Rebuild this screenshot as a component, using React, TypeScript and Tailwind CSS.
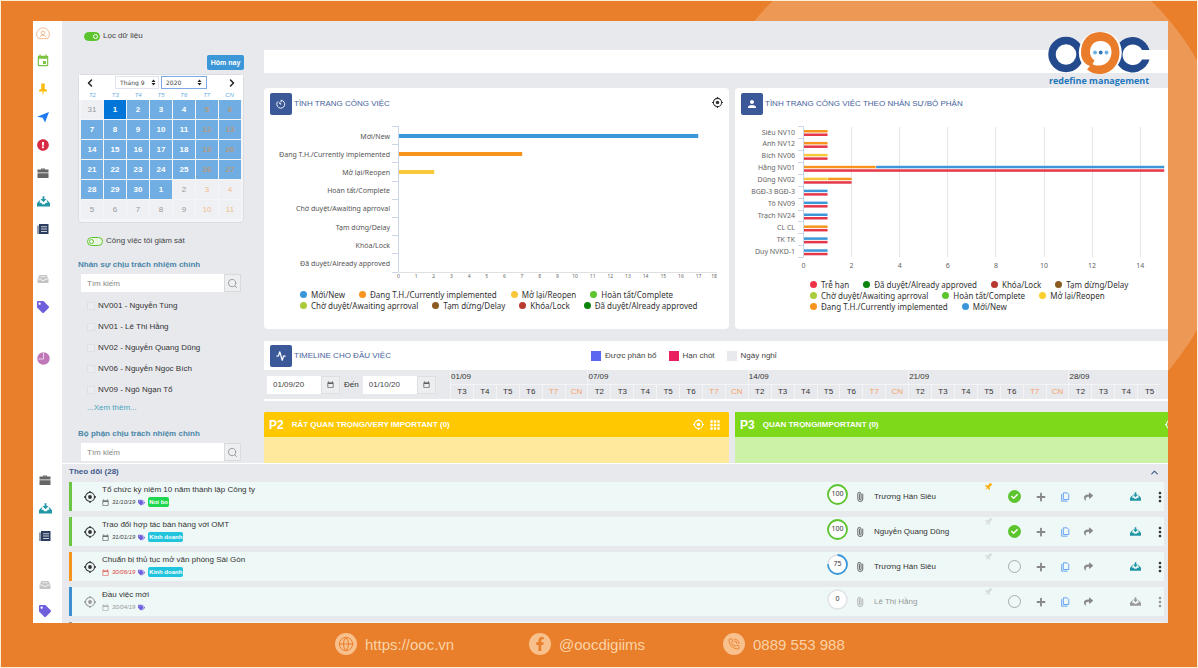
import React from "react";
import { FaExclamationCircle, FaTag, FaTags, FaFacebookF, FaShare, FaPlus, FaCheck } from "react-icons/fa";
import { MdEvent, MdOutlineCalendarToday, MdPerson, MdApps, MdMoreVert } from "react-icons/md";
import { Activity, ChevronLeft, ChevronRight, ChevronUp, Globe, Paperclip, PhoneCall, Search } from "lucide-react";

/* ---------- icons ---------- */

type IconProps = { className?: string };

const Target = ({ className }: IconProps) => (
  <svg viewBox="0 0 24 24" className={className} fill="none" stroke="currentColor" aria-hidden="true">
    <circle cx="12" cy="12" r="9" strokeWidth="2.2" />
    <circle cx="12" cy="12" r="3.8" fill="currentColor" stroke="none" />
    <path d="M12 0v3M12 21v3M0 12h3M21 12h3" strokeWidth="2.6" />
  </svg>
);

const Face = ({ className }: IconProps) => (
  <svg viewBox="0 0 24 24" className={className} fill="none" stroke="currentColor" strokeWidth="1.6" aria-hidden="true">
    <path d="M4 20a11 11 0 1 1 16 0z" />
    <circle cx="12" cy="10" r="3.2" />
    <path d="M6.5 18c1-3 3-4 5.500-4s4.500 1 5.500 4" />
  </svg>
);

const Pin = ({ className }: IconProps) => (
  <svg viewBox="0 0 24 24" className={className} fill="currentColor" aria-hidden="true">
    <path d="M8.500 1h7v10.500l4.500 2.500v3H4v-3l4.500-2.500zM11 17h2v6h-2z" />
  </svg>
);

const Arrow = ({ className }: IconProps) => (
  <svg viewBox="0 0 24 24" className={className} fill="currentColor" aria-hidden="true">
    <path d="M24 2L0 11.500l11.500 1.800L16 23z" />
  </svg>
);

const Briefcase = ({ className }: IconProps) => (
  <svg viewBox="0 0 24 24" className={className} fill="currentColor" aria-hidden="true">
    <path d="M8 5V3h8v2h7v6H1V5zm2 0h4V4.400h-4zM1 12.500h22V22H1z" />
  </svg>
);

const Tray = ({ className }: IconProps) => (
  <svg viewBox="0 0 24 24" className={className} fill="currentColor" aria-hidden="true">
    <path d="M10.300 2.500h3.400v5h3.800L12 13.500 6.500 7.500h3.800z" />
    <path d="M4.500 10h2l-2.300 4.500H8L9.500 17h5l1.500-2.500h3.800L17.500 10h2l4.500 5v6H0v-6z" />
  </svg>
);

const Journal = ({ className }: IconProps) => (
  <svg viewBox="0 0 24 24" className={className} aria-hidden="true">
    <path fill="currentColor" d="M4 2h19v20H4zM1 5h2v17H1z" />
    <path stroke="#fff" strokeWidth="1.500" d="M8 7.500h12M8 12h12M8 17h12" />
  </svg>
);

const Inbox = ({ className }: IconProps) => (
  <svg viewBox="0 0 24 24" className={className} aria-hidden="true">
    <path fill="currentColor" d="M5 4h14l4 8v8H1v-8z" />
    <path fill="none" stroke="#fff" strokeWidth="1.500" d="M2 12h6l1.500 3h5L16 12h6M7 7.500h10" />
  </svg>
);

const PieClock = ({ className }: IconProps) => (
  <svg viewBox="0 0 24 24" className={className} aria-hidden="true">
    <circle cx="12" cy="12" r="11.500" fill="currentColor" />
    <path fill="none" stroke="#f3e4f1" strokeWidth="1.600" d="M12 1v12H3" />
  </svg>
);

const Gauge = ({ className }: IconProps) => (
  <svg viewBox="0 0 24 24" className={className} fill="none" stroke="currentColor" strokeWidth="2.2" aria-hidden="true">
    <path d="M5 5.500A9.500 9.500 0 1 0 12 3v5" />
    <path d="M7.500 8.500L12 13" strokeWidth="2.800" />
  </svg>
);

const Copy = ({ className }: IconProps) => (
  <svg viewBox="0 0 24 24" className={className} fill="none" stroke="currentColor" strokeWidth="2.2" aria-hidden="true">
    <path d="M8 2h9l4 4v12H8z" />
    <path d="M4 5v17h14" />
  </svg>
);

const Sort = ({ className }: IconProps) => (
  <svg viewBox="0 0 8 12" className={className} fill="currentColor" aria-hidden="true">
    <path d="M4 1l3.500 4.300h-7zM4 11L.5 6.700h7z" />
  </svg>
);

const Logo = () => (
  <svg viewBox="0 0 102 44" className="block h-[44px] w-[102px]" role="img" aria-label="OOC">
    <circle cx="18" cy="22.500" r="14" fill="#fff" stroke="#234a8d" strokeWidth="7.400" />
    <circle cx="84.500" cy="22.500" r="12" fill="#fff" />
    <path d="M101.500 18H94A10.300 10.300 0 1 0 94 27.500H101.500A17.700 17.700 0 1 1 101.500 18z" fill="#234a8d" />
    <circle cx="52.300" cy="20.500" r="21.500" fill="#fff" />
    <path
      fill="#ea7d2c"
      fillRule="evenodd"
      d="M52 0C63.500 0 71.500 8.500 71.500 20.500S63 42 52 42c-5 0-9.500-1.500-13-4.800l3-3.200C35.500 31.500 33 26.500 33 20.500 33 8.500 40.500 0 52 0zm.5 9C46 9 42 13.500 42 20c0 3.500 1.500 6.500 4.500 8.500L44.500 32c1.500 1.200 4 1.800 7.500 1.500C59 33 63.500 27 63.500 20S59 9 52.500 9z"
    />
    <circle cx="47" cy="20.500" r="1.900" fill="#6cb1e0" />
    <circle cx="52.700" cy="20.500" r="1.900" fill="#2f74b5" />
    <circle cx="58.500" cy="20.500" r="1.900" fill="#6cb1e0" />
  </svg>
);

/* ---------- navigation ---------- */

const navTop = [
  { label: "Cá nhân", icon: <Face className="size-3.5 text-[#f3b68a]" />, box: "h-[26px]" },
  { label: "Lịch", icon: <MdEvent className="size-3.5 text-[#7bc142]" />, box: "h-7" },
  { label: "Ghim", icon: <Pin className="size-3 text-[#fbbc12]" />, box: "h-7" },
  { label: "Đã gửi", icon: <Arrow className="size-3 text-[#1f7af0]" />, box: "h-7" },
  { label: "Cảnh báo", icon: <FaExclamationCircle className="size-3 text-[#d92b45]" />, box: "h-7" },
  { label: "Công việc", icon: <Briefcase className="size-3 text-[#666666]" />, box: "h-7" },
  { label: "Tải về", icon: <Tray className="size-[13px] text-[#2196a6]" />, box: "h-7" },
  { label: "Báo cáo", icon: <Journal className="size-3 text-[#2c3e5f]" />, box: "h-7" },
  { label: "Hộp thư", icon: <Inbox className="size-3 text-[#c4c4c4]" />, box: "mt-[22px] h-7" },
  { label: "Nhãn", icon: <FaTag className="size-3 text-[#6f5fdc]" />, box: "h-7" },
  { label: "Thống kê", icon: <PieClock className="size-[13px] text-[#bf77b8]" />, box: "mt-[23px] h-7" },
];

const navBottom = [
  { label: "Công việc", icon: <Briefcase className="size-3 text-[#666666]" />, box: "mt-[3px] h-7" },
  { label: "Tải về", icon: <Tray className="size-[13px] text-[#2196a6]" />, box: "h-7" },
  { label: "Báo cáo", icon: <Journal className="size-3 text-[#2c3e5f]" />, box: "h-7" },
  { label: "Hộp thư", icon: <Inbox className="size-3 text-[#c4c4c4]" />, box: "mt-[21px] h-7" },
  { label: "Nhãn", icon: <FaTag className="size-3 text-[#6f5fdc]" />, box: "h-6" },
];

function SideNav({ items, pad }: { items: typeof navTop; pad: string }) {
  return (
    <nav className="w-[29px] shrink-0 bg-white">
      <ul className={pad}>
        {items.map((it) => (
          <li key={it.label} className={it.box}>
            <a href="#" aria-label={it.label} className="flex h-full w-3 items-center justify-center *:shrink-0">
              {it.icon}
            </a>
          </li>
        ))}
      </ul>
    </nav>
  );
}

/* ---------- filters ---------- */

function Toggle({ label, on, pad }: { label: string; on: boolean; pad: string }) {
  return (
    <label className={`flex items-center gap-[3px] text-[#444] ${pad}`}>
      <input
        type="checkbox"
        defaultChecked={on}
        className="relative h-[9px] w-4 appearance-none rounded-full border border-[#5cc52e] bg-[#e8f6e2] before:absolute before:top-px before:left-px before:size-[5px] before:rounded-full before:border before:border-[#5cc52e] before:bg-white checked:bg-[#5cc52e] checked:before:left-[8px] checked:before:border-white checked:before:bg-[#5cc52e]"
      />
      {label}
    </label>
  );
}

const weekDays = ["T2", "T3", "T4", "T5", "T6", "T7", "CN"];
const calendarDays = [31, ...Array.from({ length: 30 }, (_, i) => i + 1), ...Array.from({ length: 11 }, (_, i) => i + 1)];

function dayStyle(i: number) {
  const weekend = i % 7 > 4;
  if (i === 1) return "bg-[#0275d8] font-bold text-white";
  if (i > 0 && i < 32) return weekend ? "bg-[#6fade2] font-bold text-[#b59a80]" : "bg-[#6fade2] font-bold text-white";
  return weekend ? "bg-[#eff0f3] text-[#f3bd8a]" : "bg-[#eff0f3] text-[#999]";
}

function Calendar() {
  return (
    <div className="mt-1 mr-5 ml-4 rounded-sm border border-[#dcdde2] bg-[#f4f5f7]">
      <div className="flex items-center bg-white px-[5px] pt-px">
        <button aria-label="Tháng trước" className="mr-auto">
          <ChevronLeft className="size-3 text-[#222]" strokeWidth={3} />
        </button>
        <div className="relative">
          <select aria-label="Tháng" className="h-[13px] w-[44px] appearance-none rounded-none border border-[#dfe3ee] bg-white pl-1 font-['DejaVu_Sans'] text-[6px] text-[#444]">
            <option>Tháng 9</option>
          </select>
          <Sort className="pointer-events-none absolute top-[3px] right-[3px] h-[7px] w-[5px] text-[#222]" />
        </div>
        <div className="relative ml-0.5">
          <select aria-label="Năm" className="h-[13px] w-[46px] appearance-none rounded-none border border-[#80a8e4] bg-white pl-1 font-['DejaVu_Sans'] text-[6px] text-[#444]">
            <option>2020</option>
          </select>
          <Sort className="pointer-events-none absolute top-[3px] right-[5px] h-[7px] w-[5px] text-[#222]" />
        </div>
        <button aria-label="Tháng sau" className="ml-auto">
          <ChevronRight className="size-3 text-[#222]" strokeWidth={3} />
        </button>
      </div>
      <div className="grid grid-cols-7 bg-white px-0.5 pt-0.5 pb-px text-center text-[6px] text-[#6aaee0] italic">
        {weekDays.map((d) => (
          <span key={d} className="h-2 leading-[8px]">{d}</span>
        ))}
      </div>
      <div className="grid grid-cols-7 gap-px px-0.5 pb-[3px]">
        {calendarDays.map((d, i) => (
          <button key={i} className={`h-[19px] border border-transparent ${dayStyle(i)}`}>
            {d}
          </button>
        ))}
      </div>
    </div>
  );
}

function SearchField({ id }: { id: string }) {
  return (
    <div className="mt-[3px] mr-[23px] ml-[19px] flex h-[18px]">
      <input id={id} placeholder="Tìm kiếm" className="w-0 flex-1 bg-white px-1.5 placeholder:text-[#888]" />
      <button aria-label="Tìm" className="flex w-[17px] items-center justify-center border border-[#d9dade] bg-[#eeeff1]">
        <Search className="size-[11px] text-[#999]" strokeWidth={2} />
      </button>
    </div>
  );
}

const people = ["NV001 - Nguyễn Tùng", "NV01 - Lê Thị Hằng", "NV02 - Nguyễn Quang Dũng", "NV06 - Nguyễn Ngọc Bích", "NV09 - Ngô Ngạn Tổ"];

function Filters() {
  return (
    <aside className="w-[202px] shrink-0 pt-2.5 pb-0.5">
      <Toggle label="Lọc dữ liệu" on pad="h-2.5 pl-[22px]" />
      <div className="mt-3.5 mr-5 flex justify-end">
        <button className="h-[15px] w-[37px] rounded-[2px] bg-[#3b97d8] text-[7px] font-bold text-white">Hôm nay</button>
      </div>
      <Calendar />
      <Toggle label="Công việc tôi giám sát" on={false} pad="mt-3 h-3 pl-[25px]" />
      <label htmlFor="person" className="mt-3 ml-4 block h-3 leading-[12px] font-bold text-[#4a86a8]">
        Nhân sự chịu trách nhiệm chính
      </label>
      <SearchField id="person" />
      <ul className="mt-[3px] ml-[25px]">
        {people.map((p) => (
          <li key={p}>
            <label className="flex h-[21px] items-center gap-[3px] text-[#333]">
              <input type="checkbox" className="size-2 appearance-none border border-[#dfe0e4] bg-[#ebecef]" />
              {p}
            </label>
          </li>
        ))}
      </ul>
      <a href="#" className="ml-[25px] block h-4 leading-[16px] text-[#4ba3bd]">
        ...Xem thêm...
      </a>
      <label htmlFor="unit" className="mt-3 ml-4 block h-3 leading-[12px] font-bold text-[#4a86a8]">
        Bộ phận chịu trách nhiệm chính
      </label>
      <SearchField id="unit" />
    </aside>
  );
}

/* ---------- charts ---------- */

const BLUE = "#3b97d8";
const ORANGE = "#f7941d";
const YELLOW = "#f9c73a";
const RED = "#e5374a";

const statuses = [
  { name: "Mới/New", value: 17, color: BLUE },
  { name: "Đang T.H./Currently implemented", value: 7, color: ORANGE },
  { name: "Mở lại/Reopen", value: 2, color: YELLOW },
  { name: "Hoàn tất/Complete", value: 0, color: "" },
  { name: "Chờ duyệt/Awaiting aprroval", value: 0, color: "" },
  { name: "Tạm dừng/Delay", value: 0, color: "" },
  { name: "Khóa/Lock", value: 0, color: "" },
  { name: "Đã duyệt/Already approved", value: 0, color: "" },
];

function StatusChart() {
  const step = 18.2;
  return (
    <svg viewBox="0 0 465 165" className="mt-1 block h-auto w-full" role="img" aria-label="Tình trạng công việc">
      <g stroke="#ccd6eb">
        <path d="M134.500 7V153.500" />
        <path d="M134.500 153.500H453" stroke="#e0e0e0" />
        {Array.from({ length: 9 }, (_, i) => (
          <path key={i} d={`M128 ${Math.round(7 + i * step)}.5h6`} />
        ))}
      </g>
      <g className="font-['Noto_Sans'] text-[7px]" fill="#555" textAnchor="end">
        {statuses.map((s, i) => (
          <text key={s.name} x="126" y={19.5 + i * step}>{s.name}</text>
        ))}
      </g>
      {statuses.map((s, i) => s.value > 0 && (
        <rect key={s.name} x="135" y={Math.round(15 + i * step)} width={s.value * 17.6} height="4" fill={s.color} />
      ))}
      <g className="font-['Noto_Sans'] text-[5px]" fill="#666" textAnchor="middle">
        {Array.from({ length: 19 }, (_, i) => (
          <text key={i} x={i === 18 ? 450 : 134.5 + i * 17.65} y="159">{i}</text>
        ))}
      </g>
    </svg>
  );
}

const staff: { name: string; parts: [string, number][] }[] = [
  { name: "Siêu NV10", parts: [[ORANGE, 1]] },
  { name: "Anh NV12", parts: [[ORANGE, 1]] },
  { name: "Bích NV06", parts: [[YELLOW, 1]] },
  { name: "Hằng NV01", parts: [[ORANGE, 3], [BLUE, 12]] },
  { name: "Dũng NV02", parts: [[YELLOW, 1], [ORANGE, 1]] },
  { name: "BGĐ-3 BGĐ-3", parts: [[BLUE, 1]] },
  { name: "Tô NV09", parts: [[BLUE, 1]] },
  { name: "Trạch NV24", parts: [[BLUE, 1]] },
  { name: "CL CL", parts: [[ORANGE, 1]] },
  { name: "TK TK", parts: [[BLUE, 1]] },
  { name: "Duy NVKD-1", parts: [[BLUE, 1]] },
];

function StaffChart() {
  const unit = 24.05;
  const step = 11.93;
  return (
    <svg viewBox="0 0 433 154" className="mt-1 block h-auto w-full" role="img" aria-label="Tình trạng công việc theo nhân sự">
      <g stroke="#e6e6e6">
        {Array.from({ length: 7 }, (_, i) => (
          <path key={i} d={`M${Math.round(68 + (i + 1) * 2 * unit)}.5 8V138`} />
        ))}
      </g>
      <g stroke="#ccd6eb">
        <path d="M68.500 7V138.500" />
        {Array.from({ length: 12 }, (_, i) => (
          <path key={i} d={`M63 ${Math.round(7 + i * step)}.5h5`} />
        ))}
      </g>
      {staff.map((s, i) => {
        let at = 0;
        const total = s.parts.reduce((n, p) => n + p[1], 0);
        return (
          <g key={s.name}>
            {s.parts.map(([color, n], k) => {
              const x = 69 + at * unit;
              at += n;
              return <rect key={k} x={x} y={11 + i * step} width={n * unit - 0.5} height="2.500" fill={color} />;
            })}
            <rect x="69" y={14.5 + i * step} width={total * unit - 0.5} height="2.500" fill={RED} />
            <text x="60" y={15.5 + i * step} fill="#666" textAnchor="end" className="font-['Noto_Sans'] text-[7px]">
              {s.name}
            </text>
          </g>
        );
      })}
      <g className="font-['Noto_Sans'] text-[7px]" fill="#666" textAnchor="middle">
        {Array.from({ length: 8 }, (_, i) => (
          <text key={i} x={68.5 + i * 2 * unit} y="149">{i * 2}</text>
        ))}
      </g>
    </svg>
  );
}

type LegendRow = [string, string][];

function Legend({ rows, className }: { rows: LegendRow[]; className: string }) {
  return (
    <div className={`font-['Noto_Sans'] text-[#333] ${className}`}>
      {rows.map((row, i) => (
        <ul key={i} className="flex gap-3.5 whitespace-nowrap">
          {row.map(([dot, name]) => (
            <li key={name} className="flex h-[11px] items-center gap-1">
              <span className={`size-[7px] rounded-full ${dot}`} />
              {name}
            </li>
          ))}
        </ul>
      ))}
    </div>
  );
}

function SectionTitle({ icon, children }: { icon: React.ReactNode; children: React.ReactNode }) {
  return (
    <div className="flex items-center gap-0.5">
      <span className="flex h-[22px] w-[22px] items-center justify-center rounded-[2px] bg-[#3b5998] text-white">{icon}</span>
      <h2 className="whitespace-nowrap text-[#4763a0]">{children}</h2>
    </div>
  );
}

/* ---------- timeline ---------- */

const weeks = [
  { date: "01/09", days: ["T3", "T4", "T5", "T6", "T7", "CN"] },
  { date: "07/09", days: weekDays },
  { date: "14/09", days: weekDays },
  { date: "21/09", days: weekDays },
  { date: "28/09", days: ["T2", "T3", "T4", "T5"] },
];

function DateField({ label, value, w }: { label: string; value: string; w: string }) {
  return (
    <div className="flex h-[18px]">
      <input aria-label={label} defaultValue={value} className={`${w} bg-white pl-1.5 text-[#444]`} />
      <button aria-label={`Chọn ${label}`} className="flex w-[19px] items-center justify-center border border-[#dedfe3] bg-[#eceef0]">
        <MdOutlineCalendarToday className="size-[7px] text-[#333]" />
      </button>
    </div>
  );
}

function Timeline() {
  return (
    <section className="mt-3">
      <div className="flex h-[29px] items-center bg-white pl-1.5">
        <div className="w-[321px]">
          <SectionTitle icon={<Activity className="size-2.5" strokeWidth={3} />}>TIMELINE CHO ĐẦU VIỆC</SectionTitle>
        </div>
        <ul className="flex gap-3 text-[#444]">
          <li className="flex items-center gap-1"><span className="size-2.5 bg-[#5b67f0]" />Được phân bổ</li>
          <li className="flex items-center gap-1"><span className="size-2.5 bg-[#ea1f5e]" />Hạn chót</li>
          <li className="flex items-center gap-1"><span className="size-2.5 bg-[#e8e9ed]" />Ngày nghỉ</li>
        </ul>
      </div>
      <div className="flex border-b-2 border-white pr-[7px]">
        <div className="flex w-[186px] shrink-0 items-center gap-1 pl-[3px]">
          <DateField label="từ ngày" value="01/09/20" w="w-[54px]" />
          <span className="text-[#333]">Đến</span>
          <DateField label="đến ngày" value="01/10/20" w="w-[54px]" />
        </div>
        <table className="w-full table-fixed border-collapse text-[#333]">
          <thead>
            <tr className="h-[14px]">
              {weeks.map((w) => (
                <th key={w.date} colSpan={w.days.length} className="border-l border-[#f1f2f4] p-0 text-left font-normal">
                  {w.date}
                </th>
              ))}
            </tr>
          </thead>
          <tbody>
            <tr className="h-[15px]">
              {weeks.flatMap((w) =>
                w.days.map((d, i) => (
                  <td
                    key={w.date + i}
                    className={`border border-r-0 border-b-0 border-[#f4f4f6] p-0 text-center ${d === "T7" || d === "CN" ? "text-[#f5a265]" : ""}`}
                  >
                    {d}
                  </td>
                )),
              )}
            </tr>
          </tbody>
        </table>
      </div>
    </section>
  );
}

/* ---------- task list ---------- */

type Task = {
  title: string;
  date: string;
  dateColor: string;
  tag?: string;
  tagColor?: string;
  percent: number;
  owner: string;
  edge: string;
  pinned: boolean;
  done: boolean;
  muted: boolean;
};

const tasks: Task[] = [
  { title: "Tổ chức kỷ niệm 10 năm thành lập Công ty", date: "31/10/19", dateColor: "text-[#444]", tag: "Noi bo", tagColor: "bg-[#1fd84f]", percent: 100, owner: "Trương Hán Siêu", edge: "border-[#6cc644]", pinned: true, done: true, muted: false },
  { title: "Trao đổi hợp tác bán hàng với OMT", date: "31/01/19", dateColor: "text-[#444]", tag: "Kinh doanh", tagColor: "bg-[#22c3dd]", percent: 100, owner: "Nguyễn Quang Dũng", edge: "border-[#6cc644]", pinned: false, done: true, muted: false },
  { title: "Chuẩn bị thủ tục mở văn phòng Sài Gòn", date: "30/06/19", dateColor: "text-[#e0443e]", tag: "Kinh doanh", tagColor: "bg-[#22c3dd]", percent: 75, owner: "Trương Hán Siêu", edge: "border-[#f7941d]", pinned: false, done: false, muted: false },
  { title: "Đầu việc mới", date: "30/04/19", dateColor: "text-[#999]", percent: 0, owner: "Lê Thị Hằng", edge: "border-[#3b8fd0]", pinned: false, done: false, muted: true },
];

function Ring({ percent }: { percent: number }) {
  const len = 2 * Math.PI * 9.5;
  const color = percent === 100 ? "#5cc52e" : "#3b97d8";
  return (
    <svg viewBox="0 0 21 21" className="mb-1 size-[21px]" role="img" aria-label={`${percent}%`}>
      <circle cx="10.500" cy="10.500" r="9.500" fill="#fff" stroke="#e0e2e5" strokeWidth="1.500" />
      {percent > 0 && (
        <circle cx="10.500" cy="10.500" r="9.500" fill="none" stroke={color} strokeWidth="1.800" strokeDasharray={`${(len * percent) / 100} ${len}`} transform="rotate(-90 10.500 10.500)" />
      )}
      <text x="10.500" y="12" textAnchor="middle" fill="#333" className="font-['Noto_Sans'] text-[7px]">{percent}</text>
    </svg>
  );
}

function TaskRow({ t }: { t: Task }) {
  const dim = t.muted ? "text-[#999]" : "text-[#333]";
  return (
    <li className={`flex h-[29px] items-center border-l-3 bg-[#eef8f7] ${t.edge}`}>
      <button aria-label="Xem" className="mr-1.5 ml-3">
        <Target className={`size-3 ${dim}`} />
      </button>
      <div className="min-w-0 flex-1">
        <h3 className="h-[11px] leading-[10px] whitespace-nowrap text-[#333]">{t.title}</h3>
        <div className="flex h-3 items-center gap-[3px]">
          <MdOutlineCalendarToday className={`size-[7px] ${t.dateColor}`} />
          <span className={`text-[6px] italic ${t.dateColor}`}>{t.date}</span>
          <FaTags className="size-[7px] text-[#6f5fdc]" />
          {t.tag && <span className={`rounded-[2px] px-px py-0.5 text-[6px] leading-[6px] font-bold text-white ${t.tagColor}`}>{t.tag}</span>}
        </div>
      </div>
      <div className="flex w-6 justify-center"><Ring percent={t.percent} /></div>
      <button aria-label="Tệp đính kèm" className="flex w-[22px] justify-center">
        <Paperclip className={`size-[10px] -rotate-[45deg] ${t.muted ? "text-[#aaa]" : "text-[#555]"}`} strokeWidth={2} />
      </button>
      <span className={`w-[104px] pl-[3px] whitespace-nowrap ${dim}`}>{t.owner}</span>
      <button aria-label="Ghim" className="mb-5 flex w-[26px] justify-center">
        <Pin className={`size-[9px] rotate-[45deg] ${t.pinned ? "text-[#f9b21a]" : "text-[#d8dcdc]"}`} />
      </button>
      <button aria-label="Hoàn thành" className="flex w-[27px] justify-center">
        {t.done ? (
          <span className="flex size-[13px] items-center justify-center rounded-full bg-[#5cc52e]"><FaCheck className="size-[7px] text-white" /></span>
        ) : (
          <span className="size-[13px] rounded-full border border-[#aaa]" />
        )}
      </button>
      <button aria-label="Thêm" className="flex w-[25px] justify-center"><FaPlus className="size-2.5 text-[#888]" /></button>
      <button aria-label="Sao chép" className="flex w-6 justify-center"><Copy className="size-[10px] text-[#5b9bf0]" /></button>
      <button aria-label="Chia sẻ" className="flex w-[22px] justify-center"><FaShare className="size-[9px] text-[#888]" /></button>
      <button aria-label="Tải về" className="ml-5 flex w-8 justify-center"><Tray className={`size-[11px] ${t.muted ? "text-[#999]" : "text-[#2196a6]"}`} /></button>
      <button aria-label="Thêm nữa" className="flex w-[13px] justify-end"><MdMoreVert className={`h-3 w-2 ${dim}`} viewBox="7 3 10 18" /></button>
    </li>
  );
}

/* ---------- page ---------- */

const contacts = [
  { text: "https://ooc.vn", href: "https://ooc.vn", icon: <Globe className="size-4" strokeWidth={1.5} /> },
  { text: "@oocdigiims", href: "#", icon: <FaFacebookF className="size-3.5" /> },
  { text: "0889 553 988", href: "tel:0889553988", icon: <PhoneCall className="size-3" strokeWidth={1.8} /> },
];

export default function App() {
  return (
    <div className="relative isolate flex min-h-screen flex-col overflow-hidden border border-[#fbeed3] bg-[#e97f2b] pt-5 font-['Liberation_Sans',sans-serif] text-[8px] leading-none">
      <div className="absolute -top-[77px] -right-[36px] -z-10 size-[542px] rounded-full bg-[#ee9855]" />
      <main className="mr-[29px] ml-8 flex flex-1 flex-col bg-[#e8e9ed]">
        <div className="relative flex">
          <SideNav items={navTop} pad="pl-1" />
          <Filters />
          <div className="flex min-w-0 flex-1 flex-col overflow-hidden pt-[29px]">
            <div className="h-[23px] bg-white" />
            <div className="mt-[15px] grid grid-cols-[465fr_433fr] gap-1.5">
              <section className="rounded-sm bg-white pt-[5px] pb-[17px]">
                <div className="flex items-center justify-between pr-1.5 pl-1.5">
                  <SectionTitle icon={<Gauge className="size-2.5" />}>TÌNH TRẠNG CÔNG VIỆC</SectionTitle>
                  <button aria-label="Tập trung" className="mb-1"><Target className="size-[11px] text-[#333]" /></button>
                </div>
                <StatusChart />
                <Legend
                  className="mt-[5px] pl-9"
                  rows={[
                    [["bg-[#3b97d8]", "Mới/New"], ["bg-[#f7941d]", "Đang T.H./Currently implemented"], ["bg-[#f9c73a]", "Mở lại/Reopen"], ["bg-[#5cc52e]", "Hoàn tất/Complete"]],
                    [["bg-[#a8cc3a]", "Chờ duyệt/Awaiting aprroval"], ["bg-[#8a5a1e]", "Tạm dừng/Delay"], ["bg-[#b8392f]", "Khóa/Lock"], ["bg-[#0a840a]", "Đã duyệt/Already approved"]],
                  ]}
                />
              </section>
              <section className="rounded-l-sm bg-white pt-[5px] pb-[17px]">
                <div className="pl-1.5">
                  <SectionTitle icon={<MdPerson className="size-3" />}>TÌNH TRẠNG CÔNG VIỆC THEO NHÂN SỰ/BỘ PHẬN</SectionTitle>
                </div>
                <StaffChart />
                <Legend
                  className="mt-1.5 pl-[75px]"
                  rows={[
                    [["bg-[#ee3346]", "Trễ hạn"], ["bg-[#0a840a]", "Đã duyệt/Already approved"], ["bg-[#b8392f]", "Khóa/Lock"], ["bg-[#8a5a1e]", "Tạm dừng/Delay"]],
                    [["bg-[#a8cc3a]", "Chờ duyệt/Awaiting aprroval"], ["bg-[#5cc52e]", "Hoàn tất/Complete"], ["bg-[#fbcf2d]", "Mở lại/Reopen"]],
                    [["bg-[#f7941d]", "Đang T.H./Currently implemented"], ["bg-[#3b97d8]", "Mới/New"]],
                  ]}
                />
              </section>
            </div>
            <Timeline />
            <div className="mt-[11px] grid flex-1 grid-cols-[465fr_433fr] gap-1.5">
              <section className="flex flex-col bg-[#fee99c]">
                <div className="flex h-[25px] items-center rounded-t-[2px] bg-[#ffc800] px-[5px] font-bold text-white">
                  <span className="mr-2 text-[12px]">P2</span>
                  <h2>RẤT QUAN TRỌNG/VERY IMPORTANT (0)</h2>
                  <button aria-label="Tập trung" className="mr-1 ml-auto"><Target className="size-[11px]" /></button>
                  <button aria-label="Dạng lưới" className="mr-0.5"><MdApps className="size-3.5" /></button>
                </div>
              </section>
              <section className="flex min-w-0 flex-col overflow-hidden bg-[#cbf2a6]">
                <div className="flex h-[25px] items-center bg-[#7ed91b] pl-[5px] font-bold text-white">
                  <span className="mr-2 text-[12px]">P3</span>
                  <h2>QUAN TRỌNG/IMPORTANT (0)</h2>
                  <button aria-label="Tập trung" className="-mr-2 ml-auto"><Target className="size-[11px]" /></button>
                </div>
              </section>
            </div>
          </div>
          <div className="absolute top-[11px] right-[18px] flex w-[102px] flex-col items-center">
            <Logo />
            <p className="font-['Open_Sans'] text-[9px] leading-[10px] font-bold whitespace-nowrap text-[#1d76bd]">redefine management</p>
          </div>
        </div>

        <div className="flex flex-1">
          <SideNav items={navBottom} pad="pl-1.5" />
          <section className="min-w-0 flex-1 border-t border-white pr-1 pl-[7px]">
            <div className="mb-0.5 flex h-4 items-center justify-between pr-1 font-bold text-[#3f5a8c]">
              <h2>Theo dõi (28)</h2>
              <button aria-label="Thu gọn"><ChevronUp className="size-[11px]" strokeWidth={2.5} /></button>
            </div>
            <ul className="flex flex-col gap-1.5">
              {tasks.map((t) => (
                <TaskRow key={t.title} t={t} />
              ))}
              <li className="h-px border-l-3 border-[#999] bg-[#eef8f7]" />
            </ul>
          </section>
        </div>
      </main>
      <footer className="flex h-11 shrink-0 items-center pb-0.5 pl-[334px] text-[15px] text-[#fbd3a6]">
        {contacts.map((c, i) => (
          <a key={c.text} href={c.href} className={`flex items-center gap-2 whitespace-nowrap ${i < 2 ? "w-[194px]" : ""}`}>
            <span className="flex size-[22px] items-center justify-center rounded-full bg-[#f8c08d] text-[#e97f2b]">{c.icon}</span>
            {c.text}
          </a>
        ))}
      </footer>
    </div>
  );
}
